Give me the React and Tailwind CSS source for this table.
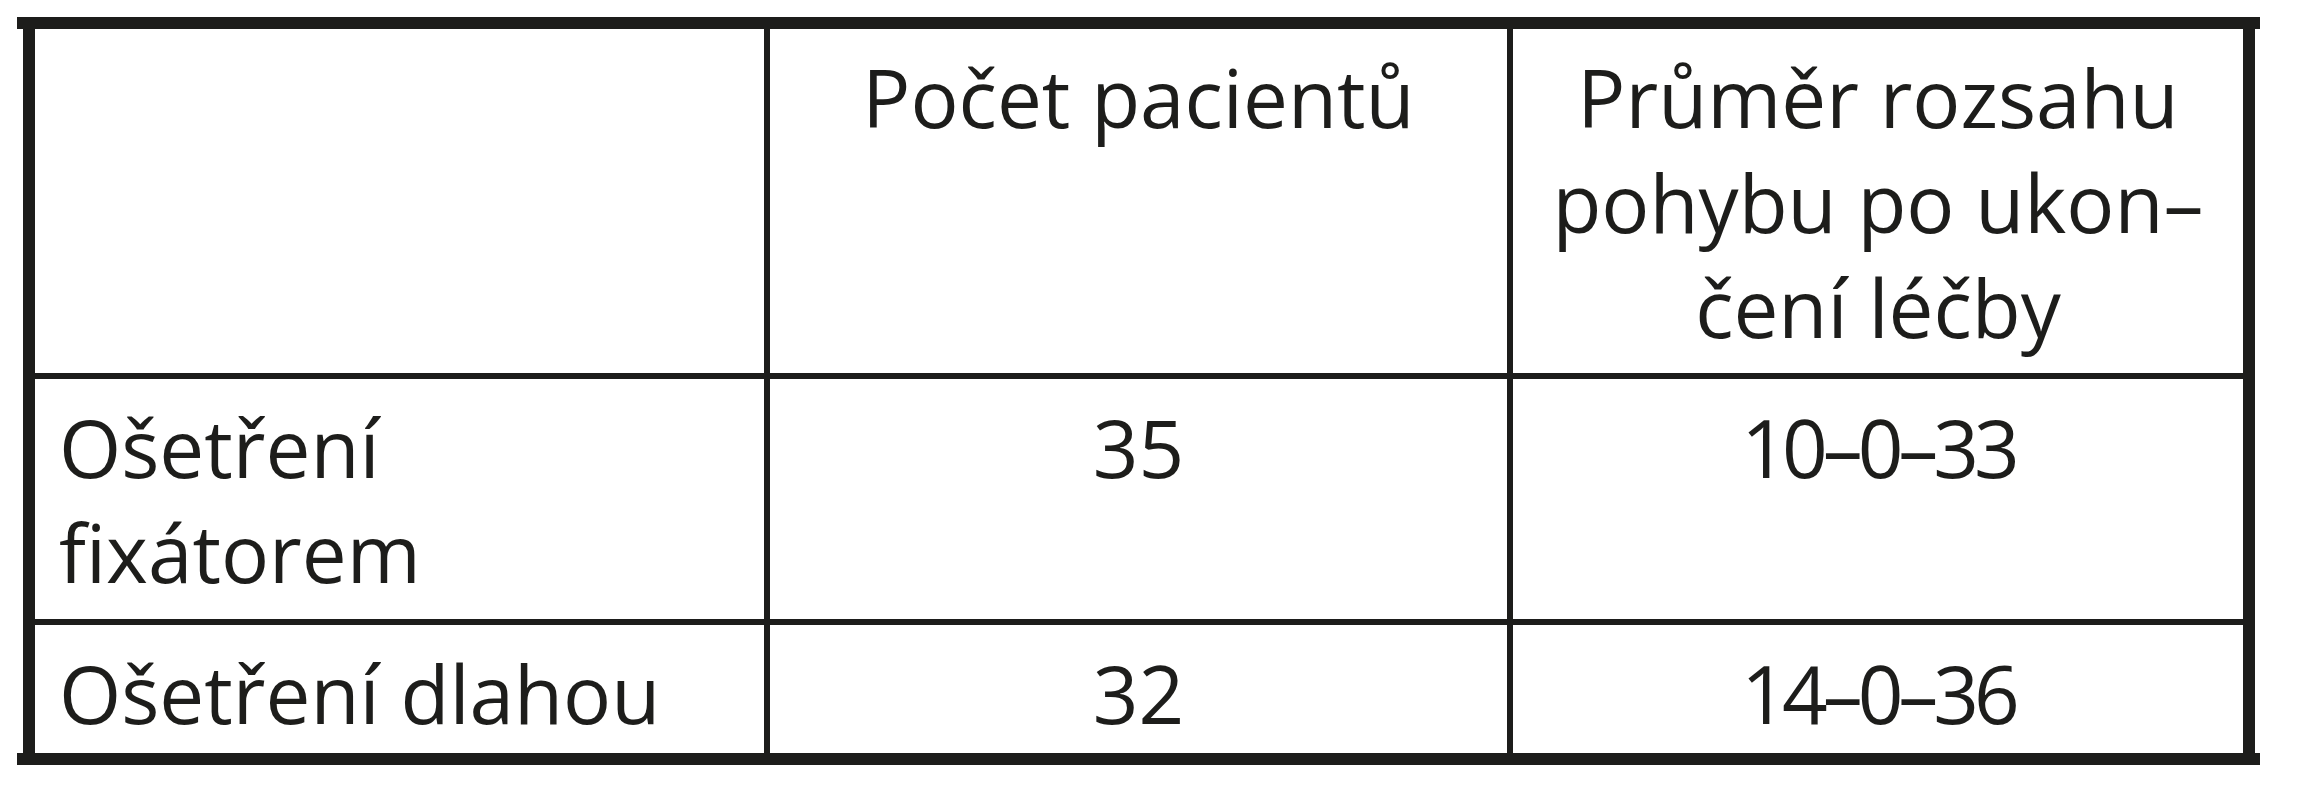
// Tabulka: rozsah pohybu po léčbě
const LINE = "border-[#1d1d1b]";

const Cell = ({ className = "", children }) => (
  <div className={"h-full pt-[15px] " + className}>{children}</div>
);

export default function App() {
  return (
    <div
      className="min-h-screen bg-white pl-[17px] pt-[17px] text-[#1d1d1b]"
      style={{ fontFamily: '"Open Sans", "Noto Sans", sans-serif' }}
    >
      <div className={"w-[2243px] border-y-[12px] " + LINE}>
        <div className={"ml-[6px] mr-[5px] border-x-[12px] " + LINE}>
          {/* @ header row */}
          <div className={"flex h-[350px] border-b-[6px] text-[80px] leading-[105px] " + LINE}>
            <Cell className={"w-[735px] border-r-[6px] " + LINE} />
            <Cell className={"w-[743px] border-r-[6px] text-center " + LINE}>
              Počet pacientů
            </Cell>
            <Cell className="flex-1 text-center whitespace-nowrap">
              Průměr rozsahu
              <br />
              pohybu po ukon–
              <br />
              čení léčby
            </Cell>
          </div>

          {/* @ row 1 */}
          <div className={"flex h-[246px] border-b-[6px] text-[80px] leading-[105px] " + LINE}>
            <Cell className={"w-[735px] border-r-[6px] pl-[24px] " + LINE}>
              Ošetření
              <br />
              fixátorem
            </Cell>
            <Cell className={"w-[743px] border-r-[6px] text-center " + LINE}>35</Cell>
            <Cell className="flex-1 text-center tracking-[-5px]">10–0–33</Cell>
          </div>

          {/* @ row 2 */}
          <div className="flex h-[128px] text-[80px] leading-[105px]">
            <Cell className={"w-[735px] border-r-[6px] pl-[24px] whitespace-nowrap " + LINE}>
              Ošetření dlahou
            </Cell>
            <Cell className={"w-[743px] border-r-[6px] text-center " + LINE}>32</Cell>
            <Cell className="flex-1 text-center tracking-[-5px]">14–0–36</Cell>
          </div>
        </div>
      </div>
    </div>
  );
}
